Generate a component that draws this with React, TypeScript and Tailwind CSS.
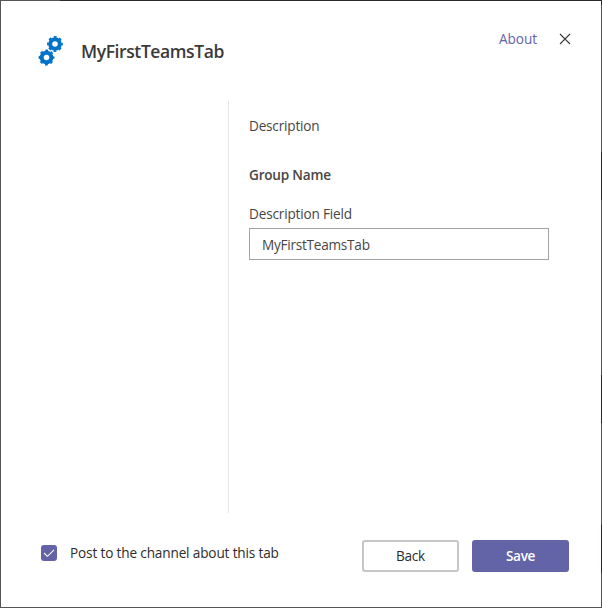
import { useState } from "react";

function Gear({ cx, cy }: { cx: number; cy: number }) {
  return (
    <g fill="none" stroke="#0072c9">
      <circle cx={cx} cy={cy} r="4.8" strokeWidth="4" />
      <circle cx={cx} cy={cy} r="7.1" strokeWidth="1.6" strokeDasharray="2.9 2.676" strokeDashoffset="1.45" />
    </g>
  );
}

function Header() {
  return (
    <header className="flex h-[100px] shrink-0 items-start">
      <svg className="ml-[37px] mt-[34px] h-8 w-7 shrink-0" viewBox="0 0 28 32">
        <Gear cx={17} cy={9} />
        <Gear cx={8.5} cy={22.5} />
      </svg>
      <h1 className="ml-[15px] mt-[38px] text-[17.5px] leading-6 font-semibold tracking-[-0.4px] text-[#3b3a39]">MyFirstTeamsTab</h1>
      <a className="ml-auto mt-[28px] text-[13.6px] leading-5 tracking-[-0.05px] text-[#6264a7]">About</a>
      <button aria-label="Close" className="ml-[22px] mr-[30px] mt-[32px] h-3 w-3">
        <svg className="h-3 w-3" viewBox="0 0 12 12" fill="none" stroke="#3b3a39" strokeWidth="1.1">
          <path d="M1 1 11 11M11 1 1 11" />
        </svg>
      </button>
    </header>
  );
}

export default function App() {
  const [value, setValue] = useState("MyFirstTeamsTab");
  return (
    <div className="flex h-[608px] w-[602px] flex-col bg-white font-['Open_Sans','Noto_Sans',sans-serif] text-[13.6px] text-[#2d2c2b]">
      <div className="flex h-px shrink-0 bg-[#29282b]">
        <div className="w-[60px] bg-[#555457]" />
      </div>
      <div className="flex h-[606px]">
        <div className="w-px bg-[#555457]" />
        <main className="flex w-[600px] flex-col">
          <Header />
          <section className="flex h-[412px]">
            <div className="w-[227px]" />
            <div className="w-px bg-[#e6e6e6]" />
            <div className="ml-5 flex w-[300px] flex-col leading-5 text-[#484644]">
              <p className="mt-[15px] tracking-[-0.2px]">Description</p>
              <h2 className="mt-[29px] font-semibold tracking-[-0.22px]">Group Name</h2>
              <label htmlFor="field" className="mt-[19px] tracking-[-0.18px]">Description Field</label>
              <input
                id="field"
                className="mt-1 h-8 border border-[#a3a2a0] bg-white px-3 tracking-[-0.25px] outline-none"
                value={value}
                onChange={(e) => setValue(e.target.value)}
              />
            </div>
          </section>
          <footer className="mt-[27px] flex items-start">
            <span className="ml-10 mt-[5px] flex h-4 w-4 items-center justify-center rounded-[3px] bg-[#6264a7]">
              <svg className="h-4 w-4" viewBox="0 0 16 16" fill="none" stroke="white" strokeWidth="1.1">
                <path d="M3 8 6.5 11.3 13 4.8" />
              </svg>
            </span>
            <span className="ml-[13px] mt-[3px] leading-5 tracking-[-0.15px]">Post to the channel about this tab</span>
            <button className="ml-auto h-8 w-[97px] rounded-[3px] border-2 border-[#c8c6c4] tracking-[-0.3px]">Back</button>
            <button className="ml-[13px] mr-8 h-8 w-[97px] rounded-[3px] bg-[#6264a7] font-semibold tracking-[-0.35px] text-white">Save</button>
          </footer>
        </main>
        <div className="flex w-px flex-col bg-[#555457]">
          <div className="h-1 bg-[#29282b]" />
          <div className="mt-[147px] h-12 bg-[#252427]" />
          <div className="mt-[175px] h-12 bg-[#252427]" />
          <div className="mt-[102px] h-12 bg-[#1d2535]" />
        </div>
      </div>
      <div className="h-px shrink-0 bg-[#555457]" />
    </div>
  );
}
